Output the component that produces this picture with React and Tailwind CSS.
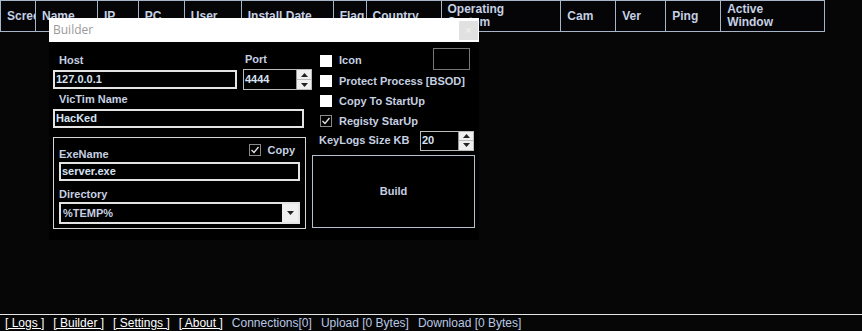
import React from "react";

const cols = [
  ["Screen", 35],
  ["Name", 62],
  ["IP", 41],
  ["PC", 46],
  ["User", 57],
  ["Install Date", 92],
  ["Flag", 33],
  ["Country", 75],
  ["Operating System", 120],
  ["Cam", 55],
  ["Ver", 50],
  ["Ping", 55],
  ["Active Window", 103],
];

function Check({ checked }) {
  return (
    <span
      className={
        "w-[12px] h-[12px] flex items-center justify-center " +
        (checked ? "bg-black border border-[#8a8a8a]" : "bg-white")
      }
    >
      {checked && (
        <svg width="10" height="10" viewBox="0 0 10 10">
          <path d="M1.5 5 L4 7.5 L8.5 2" stroke="#e8e8e8" strokeWidth="1.3" fill="none" />
        </svg>
      )}
    </span>
  );
}

function Spinner() {
  return (
    <div className="w-[15px] h-full flex flex-col bg-[#efefef] border-l border-[#999]">
      <div className="flex-1 flex items-center justify-center border-b border-[#bbb]">
        <svg width="7" height="4" viewBox="0 0 7 4"><path d="M0 4 L3.5 0 L7 4 Z" fill="#222" /></svg>
      </div>
      <div className="flex-1 flex items-center justify-center">
        <svg width="7" height="4" viewBox="0 0 7 4"><path d="M0 0 L3.5 4 L7 0 Z" fill="#222" /></svg>
      </div>
    </div>
  );
}

export default function App() {
  const label = "text-[#c6d0e2] font-bold text-[11px] leading-none";
  return (
    <div
      className="relative w-[862px] h-[331px] bg-[#060607] overflow-hidden flex flex-col"
      style={{ fontFamily: '"Liberation Sans", Arial, sans-serif' }}
    >
      {/* list header */}
      <div className="flex h-[32px] w-[825px] border border-[#a7b3c6] bg-[#050508]">
        {cols.map(([name, w], i) => (
          <div
            key={name}
            style={{ width: w }}
            className={
              "h-full flex items-center pl-[6px] overflow-hidden whitespace-nowrap text-[12px] font-bold text-[#c6d0e2] leading-[13px] " +
              (i < cols.length - 1 ? "border-r border-[#a7b3c6]" : "")
            }
          >
            {name === "Operating System" ? (
              <span>Operating<br />System</span>
            ) : name === "Active Window" ? (
              <span>Active<br />Window</span>
            ) : (
              name
            )}
          </div>
        ))}
      </div>

      <div className="flex-1" />

      {/* status bar */}
      <div className="border-t border-[#e6e6e6] h-[17px] flex items-center gap-[9px] px-[5px] text-[12px] leading-none">
        <span className="text-white underline">[ Logs ]</span>
        <span className="text-white underline">[ Builder ]</span>
        <span className="text-white underline">[ Settings ]</span>
        <span className="text-white underline">[ About ]</span>
        <span className="text-[#b9c8e2]">Connections[0]</span>
        <span className="text-[#b9c8e2]">Upload [0 Bytes]</span>
        <span className="text-[#b9c8e2]">Download [0 Bytes]</span>
      </div>

      {/* builder window */}
      <div className="absolute left-[49px] top-[18px] w-[430px] h-[222px] bg-black flex flex-col">
        <div className="h-[24px] bg-white flex items-center justify-between pl-[4px] pr-[1px]">
          <span className="text-[#9a9a9a] text-[12px]" style={{ fontFamily: '"Open Sans", sans-serif' }}>Builder</span>
          <span className="w-[19px] h-[19px] bg-[#e1e1e1] flex items-center justify-center text-[#f4f4f4] text-[11px]">×</span>
        </div>

        <div className="flex pl-[4px] pt-[5px] gap-[7px]">
          {/* left column */}
          <div className="w-[252px] flex flex-col">
            <div className="flex gap-[6px]">
              <div className="flex flex-col">
                <span className={label + " pl-[6px] pt-[8px] h-[23px]"}>Host</span>
                <div className="w-[184px] h-[19px] border-2 border-[#e4e4e4] flex items-center px-[1px] text-[11px] font-bold text-[#d8e2f2]">127.0.0.1</div>
              </div>
              <div className="flex flex-col">
                <span className={label + " pl-[2px] pt-[7px] h-[22px]"}>Port</span>
                <div className="w-[69px] h-[21px] border border-[#bcbcbc] flex items-stretch text-[11px] font-bold text-[#d8e2f2]">
                  <span className="flex-1 flex items-center pl-[1px]">4444</span>
                  <Spinner />
                </div>
              </div>
            </div>
            <span className={label + " pl-[6px] pt-[4px] h-[19px]"}>VicTim Name</span>
            <div className="w-[251px] h-[19px] border-2 border-[#e4e4e4] flex items-center px-[1px] text-[11px] font-bold text-[#d8e2f2]">HacKed</div>

            <div className="mt-[9px] w-[253px] h-[92px] border border-[#d6d6d6] flex flex-col pl-[5px] pr-[5px]">
              <div className="flex items-end justify-between h-[23px]">
                <span className={label + " pb-[1px]"}>ExeName</span>
                <span className="flex items-center gap-[7px] self-start pt-[6px] pr-[5px]">
                  <Check checked />
                  <span className={label}>Copy</span>
                </span>
              </div>
              <div className="mt-[1px] h-[19px] border-2 border-[#e4e4e4] flex items-center px-[1px] text-[11px] font-bold text-[#d8e2f2]">server.exe</div>
              <span className={label + " pt-[8px] h-[21px]"}>Directory</span>
              <div className="h-[22px] border-2 border-[#e4e4e4] flex items-stretch text-[11px] font-bold text-[#c6d0e2]">
                <span className="flex-1 flex items-center pl-[2px]">%TEMP%</span>
                <span className="w-[16px] bg-[#efefef] flex items-center justify-center">
                  <svg width="7" height="4" viewBox="0 0 7 4"><path d="M0 0 L3.5 4 L7 0 Z" fill="#222" /></svg>
                </span>
              </div>
            </div>
          </div>

          {/* right column */}
          <div className="w-[163px] flex flex-col">
            <div className="flex items-center h-[21px] mt-[3px] pl-[8px]">
              <span className="flex items-center gap-[7px] w-[113px]">
                <Check />
                <span className={label}>Icon</span>
              </span>
              <span className="w-[37px] h-[22px] border border-[#777] -mt-[4px]" />
            </div>
            <div className="flex items-center gap-[7px] h-[20px] pl-[8px]">
              <Check />
              <span className={label}>Protect Process [BSOD]</span>
            </div>
            <div className="flex items-center gap-[7px] h-[20px] pl-[8px]">
              <Check />
              <span className={label}>Copy To StartUp</span>
            </div>
            <div className="flex items-center gap-[7px] h-[20px] pl-[8px]">
              <Check checked />
              <span className={label}>Registy StarUp</span>
            </div>
            <div className="flex items-center h-[19px] pl-[7px]">
              <span className={label + " w-[101px]"}>KeyLogs Size KB</span>
              <div className="w-[54px] h-[20px] border border-[#bcbcbc] flex items-stretch text-[11px] font-bold text-[#d8e2f2]">
                <span className="flex-1 flex items-center pl-[1px]">20</span>
                <Spinner />
              </div>
            </div>
            <div className="mt-[5px] w-[163px] h-[73px] border border-[#b4bfd0] flex items-center justify-center text-[11px] font-bold text-[#c6d0e2]">
              Build
            </div>
          </div>
        </div>
      </div>
    </div>
  );
}
